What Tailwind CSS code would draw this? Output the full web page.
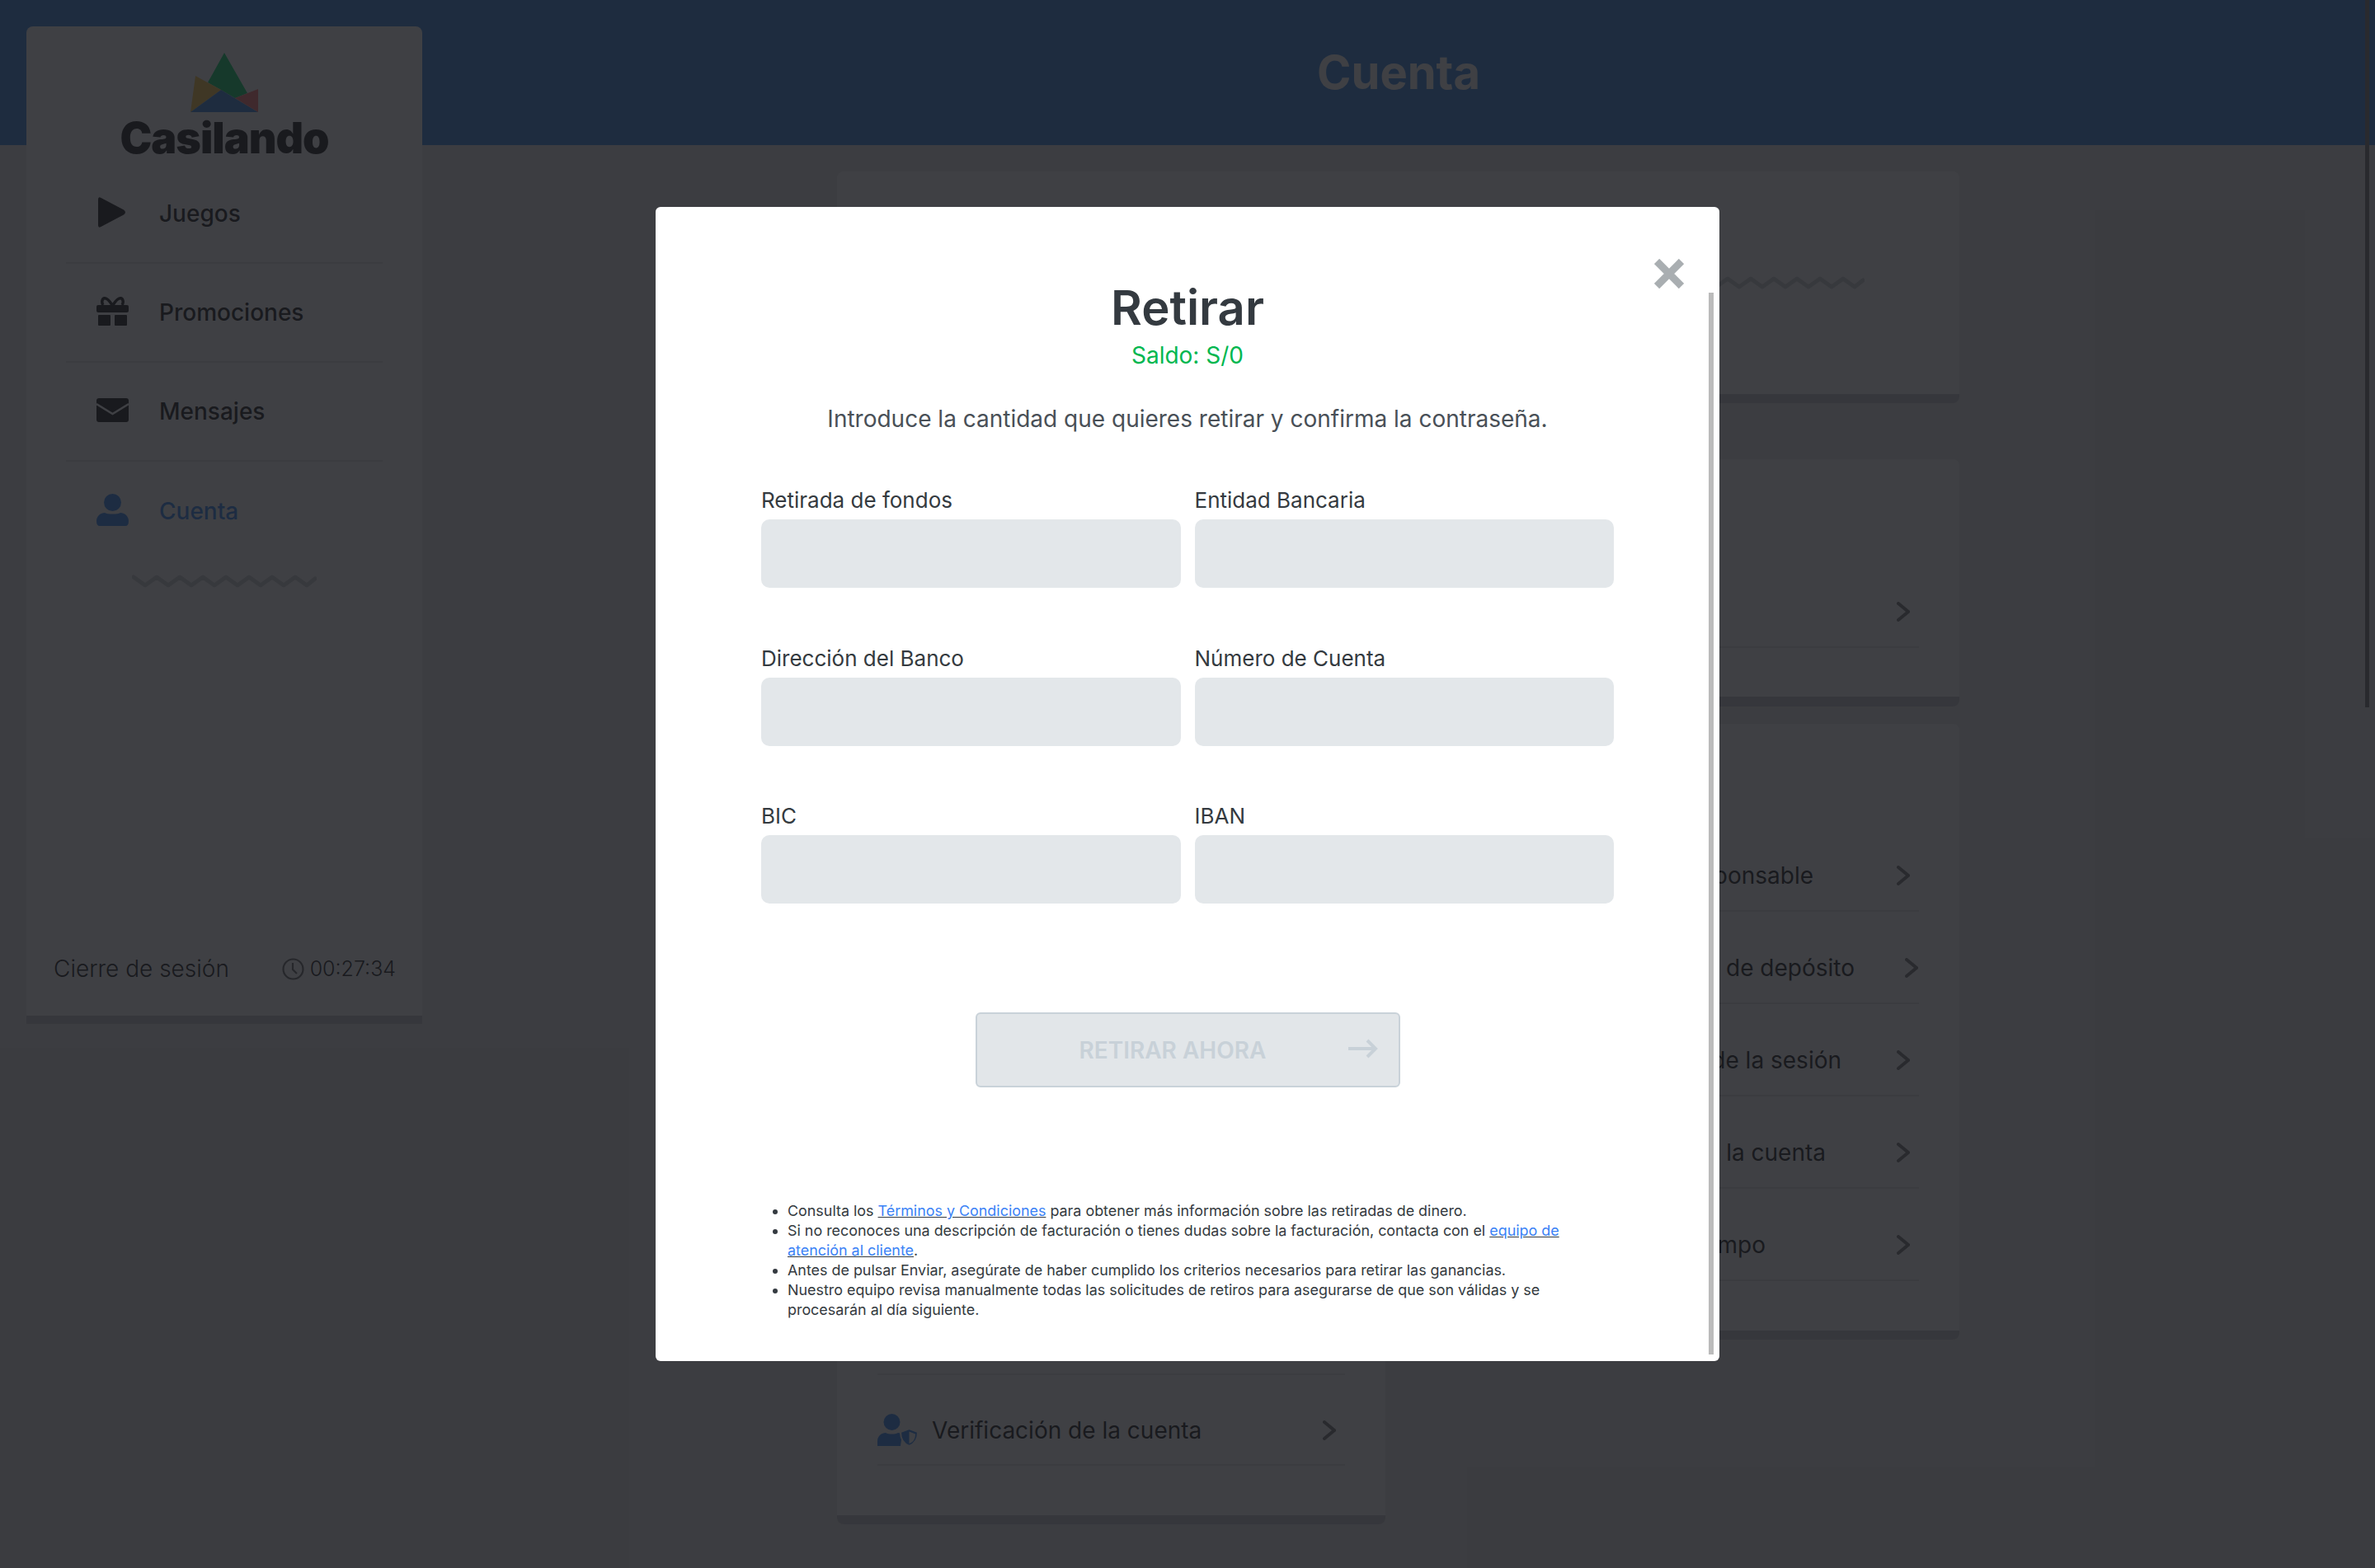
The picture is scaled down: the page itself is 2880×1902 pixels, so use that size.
<!DOCTYPE html>
<html lang="es">
<head>
    <meta charset="UTF-8">
    <meta name="viewport" content="width=device-width, initial-scale=1.0">
    <title>Cuenta - Retirar</title>
    <script src="https://cdn.jsdelivr.net/npm/@tailwindcss/browser@4"></script>
</head>
<body class="relative h-[1902px] overflow-hidden bg-[#e9e9ea] font-['Inter',sans-serif] text-[#141414]">
    <header class="h-[176px] bg-[#3586df] flex items-center justify-center pl-[512px]">
        <h1 class="text-[56px] font-bold text-white">Cuenta</h1>
    </header>

    <div class="flex items-start">
        <!-- Sidebar -->
        <aside class="relative ml-[32px] -mt-[144px] w-[480px] h-[1210px] flex flex-col bg-white rounded-t-lg border-b-[10px] border-[#c8c9cb]">
            <svg class="mt-[32px] mx-auto" width="82" height="72" viewBox="231 64 82 72">
                <polygon fill="#00d362" points="272,64 252,100 268,109 285,119 300,113"/>
                <polygon fill="#ffc542" points="237,92 268,109 231,136"/>
                <polygon fill="#3586df" points="231,136 268,109 313,136"/>
                <polygon fill="#ff6f6f" points="285,119 313,108 313,136"/>
            </svg>
            <div class="mt-[2px] text-center text-[52px] leading-[60px] font-black tracking-[-1px]">Casilando</div>
            <nav class="mt-[2px] mx-[48px]">
                <a class="h-[120px] flex items-center border-b-2 border-[#e6e6e6] pl-[37px] text-[28px] font-medium">
                    <svg class="-mt-1" width="39" height="39" viewBox="0 0 39 39"><path fill="#141414" d="M2 4Q2 0 5.5 2L33 16.5Q37 19.5 33 22.5L5.5 37Q2 39 2 35Z"/></svg>
                    <span class="ml-[37px]">Juegos</span>
                </a>
                <a class="h-[120px] flex items-center border-b-2 border-[#e6e6e6] pl-[37px] text-[28px] font-medium">
                    <svg class="-mt-1" width="39" height="35" viewBox="0 0 39 35">
                        <path fill="none" stroke="#141414" stroke-width="3.5" d="M19 10C14 2 11 1.5 9.5 1.8C6.5 2.5 6 7 8 10M20 10C25 2 28 1.5 29.5 1.8C32.5 2.5 33 7 31 10"/>
                        <rect y="10" width="39" height="9" rx="2" fill="#141414"/>
                        <rect x="2" y="22" width="15" height="13" rx="1" fill="#141414"/>
                        <rect x="22" y="22" width="15" height="13" rx="1" fill="#141414"/>
                    </svg>
                    <span class="ml-[37px]">Promociones</span>
                </a>
                <a class="h-[120px] flex items-center border-b-2 border-[#e6e6e6] pl-[37px] text-[28px] font-medium">
                    <svg class="-mt-1" width="39" height="29" viewBox="0 0 39 29">
                        <rect width="39" height="29" rx="3" fill="#141414"/>
                        <path fill="none" stroke="#fff" stroke-width="2.5" d="M0 7L19.5 19L39 7"/>
                    </svg>
                    <span class="ml-[37px]">Mensajes</span>
                </a>
                <a class="h-[120px] flex items-center pl-[37px] text-[28px] font-medium text-[#2e86ef]">
                    <svg class="-mt-1" width="39" height="39" viewBox="0 0 39 39">
                        <circle cx="19.5" cy="10.5" r="10.5" fill="#2e86ef"/>
                        <path fill="#2e86ef" d="M0 33C0 27 5 23 10 23C14 25 25 25 29 23C34 23 39 27 39 33Q39 39 35 39H4Q0 39 0 33Z"/>
                    </svg>
                    <span class="ml-[37px]">Cuenta</span>
                </a>
            </nav>
            <svg class="mt-[16px] mx-auto" width="224" height="18" viewBox="0 0 224 18">
                <polyline fill="none" stroke="#cfd0d2" stroke-width="5" stroke-linejoin="round" stroke-linecap="round" points="2,4 16,14 30,4 44,14 58,4 72,14 86,4 100,14 114,4 128,14 142,4 156,14 170,4 184,14 198,4 212,14 222,6"/>
            </svg>
            <div class="mt-auto pb-[39px] pl-[33px] pr-[32px] flex justify-between items-center text-[28px] leading-[36px] font-light">
                <span>Cierre de sesión</span>
                <span class="flex items-center gap-[7px]">
                    <svg width="27" height="27" viewBox="0 0 27 27" fill="none" stroke="#666" stroke-width="2.2"><circle cx="13.5" cy="13.5" r="12"/><path d="M13 6V14L18 19"/></svg>
                    <span class="text-[25px]">00:27:34</span>
                </span>
            </div>
        </aside>

        <!-- Account content, mostly behind the modal -->
        <main class="ml-[503px] mt-[32px] w-[1361px]">
            <section class="h-[281px] bg-white rounded-lg border-b-[11px] border-[#c8c9cb] flex justify-end pt-[126px] pr-[115px]">
                <svg width="224" height="18" viewBox="0 0 224 18">
                    <polyline fill="none" stroke="#cfd0d2" stroke-width="5" stroke-linejoin="round" stroke-linecap="round" points="2,4 16,14 30,4 44,14 58,4 72,14 86,4 100,14 114,4 128,14 142,4 156,14 170,4 184,14 198,4 212,14 222,6"/>
                </svg>
            </section>

            <div class="mt-[68px] flex gap-[20px] items-start">
                <section class="w-[665px] h-[1292px] bg-white rounded-lg border-b-[11px] border-[#c8c9cb] flex flex-col justify-end px-[49px] pb-[60px]">
                    <a class="h-[112px] border-y-2 border-[#e6e6e6] pt-[26px] pr-[11px] flex items-center text-[28px]">
                        <svg width="50" height="40" viewBox="0 0 50 40">
                            <circle cx="17.5" cy="10" r="10" fill="#2e86ef"/>
                            <path fill="#2e86ef" d="M0 39V33C0 27 5 23 10 23C14 25 21 25 25 23L30 24L28 39Z"/>
                            <path fill="#2e86ef" stroke="#fff" stroke-width="2" d="M38.5 18L49 22C49 30 46 36 38.5 39C31 36 28 30 28 22Z"/>
                            <path fill="#fff" d="M38.5 21.5L46 24.5C46 30 44 34 38.5 36Z"/>
                        </svg>
                        <span class="ml-[16px]">Verificación de la cuenta</span>
                        <svg class="ml-auto" width="16" height="24" viewBox="0 0 16 24" fill="none" stroke="#777" stroke-width="4" stroke-linecap="round"><path d="M2 2L14 12L2 22"/></svg>
                    </a>
                </section>

                <div class="w-[676px]">
                    <section class="h-[300px] bg-white rounded-lg border-b-[12px] border-[#c8c9cb] flex flex-col justify-end px-[49px] pb-[59px]">
                        <a class="h-[112px] border-b-2 border-[#e6e6e6] pt-[26px] pr-[11px] flex items-center">
                            <svg class="ml-auto" width="16" height="24" viewBox="0 0 16 24" fill="none" stroke="#777" stroke-width="4" stroke-linecap="round"><path d="M2 2L14 12L2 22"/></svg>
                        </a>
                    </section>
                    <section class="mt-[21px] h-[747px] bg-white rounded-lg border-b-[11px] border-[#c8c9cb] flex flex-col justify-end px-[49px] pb-[60px] text-[28px]">
                        <a class="h-[112px] border-b-2 border-[#e6e6e6] pt-[26px] pr-[11px] flex items-center">
                            <span class="w-[450px] text-right whitespace-nowrap">Juego responsable</span>
                            <svg class="ml-auto" width="16" height="24" viewBox="0 0 16 24" fill="none" stroke="#777" stroke-width="4" stroke-linecap="round"><path d="M2 2L14 12L2 22"/></svg>
                        </a>
                        <a class="h-[112px] border-b-2 border-[#e6e6e6] pt-[26px] pr-[1px] flex items-center">
                            <span class="w-[500px] text-right whitespace-nowrap">Límites de depósito</span>
                            <svg class="ml-auto" width="16" height="24" viewBox="0 0 16 24" fill="none" stroke="#777" stroke-width="4" stroke-linecap="round"><path d="M2 2L14 12L2 22"/></svg>
                        </a>
                        <a class="h-[112px] border-b-2 border-[#e6e6e6] pt-[26px] pr-[11px] flex items-center">
                            <span class="w-[484px] text-right whitespace-nowrap">Límites de la sesión</span>
                            <svg class="ml-auto" width="16" height="24" viewBox="0 0 16 24" fill="none" stroke="#777" stroke-width="4" stroke-linecap="round"><path d="M2 2L14 12L2 22"/></svg>
                        </a>
                        <a class="h-[112px] border-b-2 border-[#e6e6e6] pt-[26px] pr-[11px] flex items-center">
                            <span class="w-[465px] text-right whitespace-nowrap">Cierre de la cuenta</span>
                            <svg class="ml-auto" width="16" height="24" viewBox="0 0 16 24" fill="none" stroke="#777" stroke-width="4" stroke-linecap="round"><path d="M2 2L14 12L2 22"/></svg>
                        </a>
                        <a class="h-[112px] border-b-2 border-[#e6e6e6] pt-[26px] pr-[11px] flex items-center">
                            <span class="w-[392px] text-right whitespace-nowrap">Límite de tiempo</span>
                            <svg class="ml-auto" width="16" height="24" viewBox="0 0 16 24" fill="none" stroke="#777" stroke-width="4" stroke-linecap="round"><path d="M2 2L14 12L2 22"/></svg>
                        </a>
                    </section>
                </div>
            </div>
        </main>
    </div>

    <div class="absolute top-0 right-[7px] w-[5px] h-[858px] bg-[#777]"></div>

    <!-- Overlay + modal -->
    <div class="absolute inset-0 bg-[rgba(26,27,32,0.84)] flex items-center justify-center">
        <div class="relative w-[1290px] h-[1400px] bg-white rounded-md px-[128px] pt-[90px] text-[#343a40]">
            <button class="absolute top-[63px] right-[43px]">
                <svg class="block" width="36" height="36" viewBox="0 0 36 36" stroke="#a9aeb1" stroke-width="9"><path d="M3 3L33 33M33 3L3 33"/></svg>
            </button>
            <div class="absolute top-[104px] bottom-[8px] right-[7px] w-[6px] bg-[#bbb]"></div>

            <h2 class="text-center text-[58px] leading-[64px] font-semibold">Retirar</h2>
            <p class="mt-[8px] text-center text-[28px] leading-[36px] text-[#00b74f]">Saldo: S/0</p>
            <p class="mt-[41px] text-center text-[28px] leading-[36px] text-[#495057]">Introduce la cantidad que quieres retirar y confirma la contraseña.</p>

            <div class="mt-[68px] grid grid-cols-2 gap-x-[17px] gap-y-[72.5px] text-[26px] leading-[26px]">
                <label class="block">Retirada de fondos<input class="block mt-[10px] w-full h-[83px] bg-[#e3e7ea] rounded-[10px]"></label>
                <label class="block">Entidad Bancaria<input class="block mt-[10px] w-full h-[83px] bg-[#e3e7ea] rounded-[10px]"></label>
                <label class="block">Dirección del Banco<input class="block mt-[10px] w-full h-[83px] bg-[#e3e7ea] rounded-[10px]"></label>
                <label class="block">Número de Cuenta<input class="block mt-[10px] w-full h-[83px] bg-[#e3e7ea] rounded-[10px]"></label>
                <label class="block">BIC<input class="block mt-[10px] w-full h-[83px] bg-[#e3e7ea] rounded-[10px]"></label>
                <label class="block">IBAN<input class="block mt-[10px] w-full h-[83px] bg-[#e3e7ea] rounded-[10px]"></label>
            </div>

            <button class="mt-[132px] mx-auto w-[515px] h-[91px] flex items-center bg-[#e2e6e9] border-2 border-[#c9d2d9] rounded-md pl-[124px] pr-[25px] text-[28px] font-semibold text-[#c8d1d8]">
                <span>RETIRAR AHORA</span>
                <svg class="ml-auto -mt-1" width="36" height="24" viewBox="0 0 36 24" fill="none" stroke="#c8d1d8" stroke-width="4"><path d="M0 12H33M23 2L33 12L23 22"/></svg>
            </button>

            <ul class="mt-[138px] pl-[32px] list-disc text-[17.9px] leading-[24px]">
                <li>Consulta los <a class="text-[#3b82f6] underline decoration-[#343a40]">Términos y Condiciones</a> para obtener más información sobre las retiradas de dinero.</li>
                <li>Si no reconoces una descripción de facturación o tienes dudas sobre la facturación, contacta con el <a class="text-[#3b82f6] underline decoration-[#343a40]">equipo de atención al cliente</a>.</li>
                <li>Antes de pulsar Enviar, asegúrate de haber cumplido los criterios necesarios para retirar las ganancias.</li>
                <li>Nuestro equipo revisa manualmente todas las solicitudes de retiros para asegurarse de que son válidas y se procesarán al día siguiente.</li>
            </ul>
        </div>
    </div>
</body>
</html>
